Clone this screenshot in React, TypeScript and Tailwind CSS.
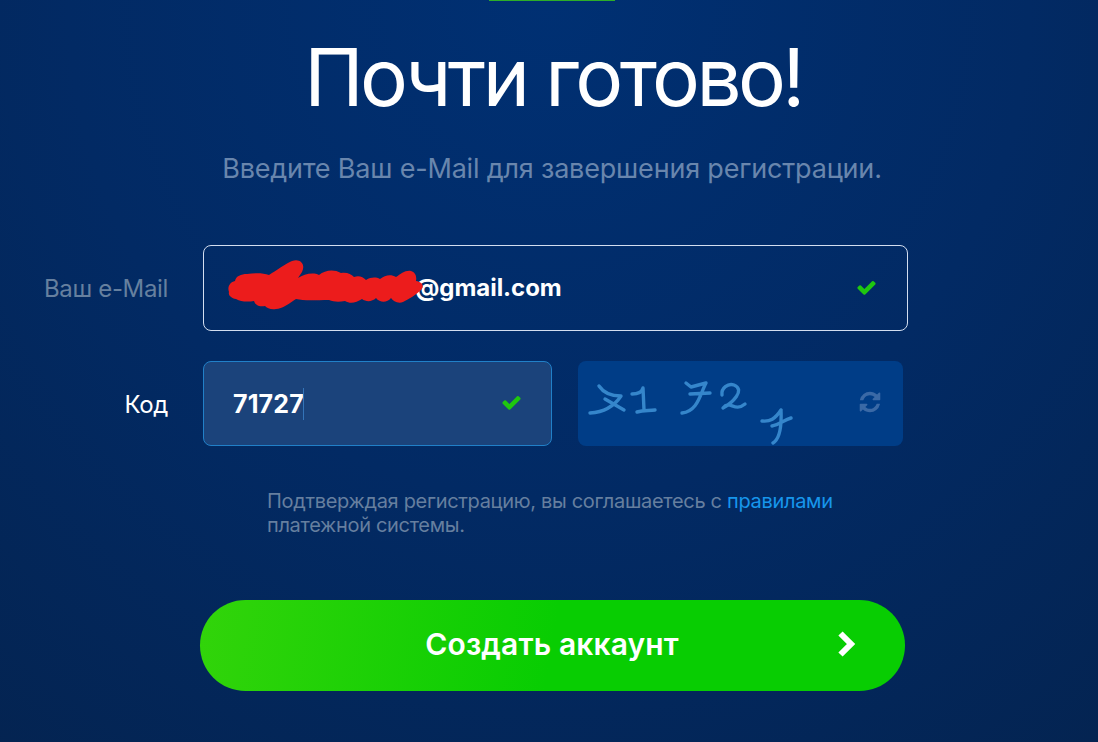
import type { ReactNode } from "react";

function Check() {
  return (
    <svg viewBox="0 0 1792 1792" className="mb-[2px] h-[21px] w-[21px] shrink-0 fill-[#1fc70f]">
      <path d="M1671 566q0 40-28 68l-724 724-136 136q-28 28-68 28t-68-28l-136-136-362-362q-28-28-28-68t28-68l136-136q28-28 68-28t68 28l294 295 656-657q28-28 68-28t68 28l136 136q28 28 28 68z" />
    </svg>
  );
}

function Refresh() {
  return (
    <svg viewBox="0 0 1792 1792" className="mb-[3px] h-6 w-6 shrink-0 fill-[#3a69a6]">
      <path d="M1639 1056q0 5-1 7-64 268-268 434.5t-478 166.5q-146 0-282.5-55t-243.5-157l-129 129q-19 19-45 19t-45-19-19-45v-448q0-26 19-45t45-19h448q26 0 45 19t19 45-19 45l-137 137q71 66 161 102t187 36q134 0 250-65t186-179q11-17 53-117 8-23 30-23h192q13 0 22.5 9.5t9.5 22.5zm25-800v448q0 26-19 45t-45 19h-448q-26 0-45-19t-19-45 19-45l138-138q-148-137-349-137-134 0-250 65t-186 179q-11 17-53 117-8 23-30 23h-199q-13 0-22.5-9.5t-9.5-22.5v-7q65-268 270-434.5t480-166.5q146 0 284 55.5t245 156.5l130-129q19-19 45-19t45 19 19 45z" />
    </svg>
  );
}

function Scribble() {
  return (
    <svg viewBox="0 0 200 60" className="absolute top-[10px] left-[19px] h-[60px] w-[200px]">
      <path
        fill="#ec1c1c"
        d="M6 36C4 31 7 26 12 25C13 20 18 18 24 18C33 17 40 17 46 19C54 14 62 8 69 5C77 2 83 8 79 16L75 22C81 18 90 16 96 19C102 14 111 13 118 17C124 16 128 18 131 21C136 19 140 21 143 24C148 21 153 21 157 23C162 19 168 18 173 21C178 18 182 14 188 15C192 16 194 20 193 25C199 26 202 30 198 34C193 39 186 43 180 46C175 48 170 45 168 42C164 47 157 47 153 42C149 46 143 46 139 43C133 47 127 48 122 45C116 46 111 46 106 44C93 44 81 45 73 43C67 47 59 53 53 53C48 54 44 52 42 50C36 51 32 49 31 45C25 46 18 46 13 43C8 42 5 39 6 36Z"
      />
    </svg>
  );
}

function Captcha() {
  return (
    <svg
      viewBox="0 0 220 85"
      className="h-[85px] w-[220px]"
      fill="none"
      stroke="#3586cb"
      strokeWidth="3.4"
      strokeLinecap="round"
      strokeLinejoin="round"
    >
      <path d="M21 25C25 31 33 35 43 35C37 44 28 51 12 52M27 38L46 49" />
      <path d="M54 33C60 33 64 31 65 27L66 49M59 51C66 49 71 50 77 49" />
      <path d="M108 22L113 26L128 22C122 33 120 50 104 52M112 33L132 32" />
      <path d="M144 34C143 27 150 22 156 24C168 29 154 42 145 47C152 38 156 52 167 43" />
      <path d="M203 49C203 54 205 76 195 82M184 60C192 61 197 58 203 49M194 65C201 64 206 59 213 57" />
    </svg>
  );
}

function Row({ label, labelClass, children }: { label: string; labelClass: string; children: ReactNode }) {
  return (
    <div className="flex items-center">
      <div className={`w-[203px] shrink-0 pt-[2px] pr-[35px] text-right text-[24px] leading-8 tracking-[-0.35px] ${labelClass}`}>
        {label}
      </div>
      {children}
    </div>
  );
}

export default function App() {
  return (
    <main className="h-[742px] w-[1098px] overflow-hidden bg-[radial-gradient(ellipse_960px_1000px_at_50%_0%,#003073_0%,#022a64_50%,#04234f_100%)] font-['Inter',sans-serif] text-white">
      <div className="ml-[489px] h-px w-[126px] bg-[#2eae28]" />

      <h1 className="ml-[8px] mt-[28px] text-center text-[80px] leading-[96px] font-normal tracking-[-3.6px] whitespace-nowrap">
        Почти готово!
      </h1>
      <p className="ml-[6px] mt-[26px] text-center text-[27px] leading-9 tracking-[-0.19px] whitespace-nowrap text-[#6986ad]">
        Введите Ваш e-Mail для завершения регистрации.
      </p>

      <form className="mt-[58px]" onSubmit={(e) => e.preventDefault()}>
        <Row label="Ваш e-Mail" labelClass="text-[#66809f]">
          <div className="relative flex h-[86px] w-[705px] items-center justify-between rounded-lg border border-[#d3def0] pr-[30px] pl-[211px]">
            <span className="text-[24px] leading-8 font-bold tracking-[-0.05px]">@gmail.com</span>
            <Check />
            <Scribble />
          </div>
        </Row>

        <div className="mt-[30px]">
          <Row label="Код" labelClass="text-white">
            <div className="flex h-[85px] w-[349px] items-center justify-between rounded-lg border border-[#2180c8] bg-[#1b437b] pr-[29px] pl-[29px]">
              <span className="flex items-center text-[25px] leading-8 font-bold tracking-[0.15px]">
                71727
                <span className="-ml-px h-8 w-px bg-[#3474b8]" />
              </span>
              <Check />
            </div>
            <div className="ml-[26px] flex h-[85px] w-[325px] items-center justify-between rounded-lg bg-[#003d87] pr-[21px]">
              <Captcha />
              <Refresh />
            </div>
          </Row>
        </div>

        <p className="mt-[43px] ml-[267px] text-[20px] leading-6 tracking-[-0.32px] whitespace-nowrap text-[#667f9f]">
          Подтверждая регистрацию, вы соглашаетесь с <a className="text-[#1796ec]">правилами</a>
          <br />
          платежной системы.
        </p>

        <button className="mt-[63px] ml-[200px] flex h-[91px] w-[705px] items-center rounded-full bg-[linear-gradient(100deg,#32d40a_0%,#08cd02_50%,#08cd02_100%)] pr-[47px] pb-[4px] pl-[70px]">
          <span className="flex-1 text-center text-[30px] leading-10 font-semibold tracking-[0.12px]">Создать аккаунт</span>
          <svg viewBox="0 0 24 28" className="h-7 w-6 fill-none stroke-white stroke-[6]">
            <path d="M6.5 3.5L17 14L6.5 24.5" />
          </svg>
        </button>
      </form>
    </main>
  );
}
